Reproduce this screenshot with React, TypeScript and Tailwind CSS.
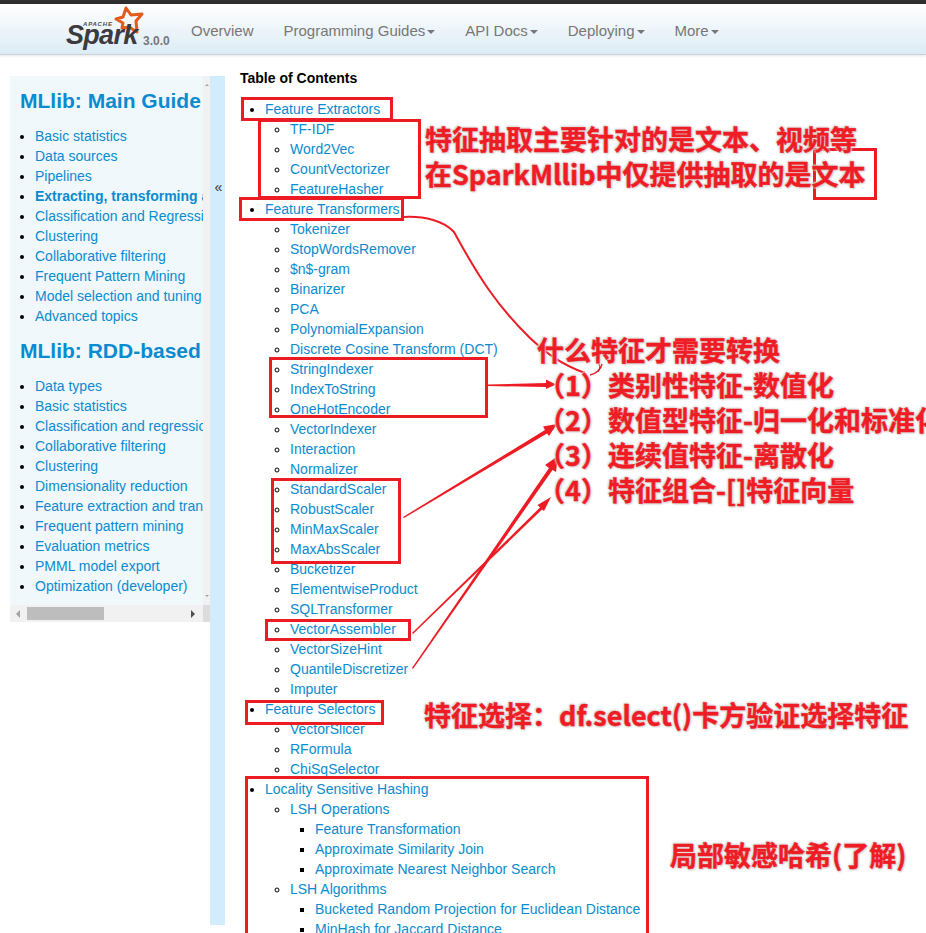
import React from 'react';

type Item = { label: string; children?: Item[] };

const mainGuide = [
    'Basic statistics', 'Data sources', 'Pipelines', 'Extracting, transforming and selecting features',
    'Classification and Regression', 'Clustering', 'Collaborative filtering', 'Frequent Pattern Mining',
    'Model selection and tuning', 'Advanced topics',
];

const rddGuide = [
    'Data types', 'Basic statistics', 'Classification and regression', 'Collaborative filtering', 'Clustering',
    'Dimensionality reduction', 'Feature extraction and transformation', 'Frequent pattern mining',
    'Evaluation metrics', 'PMML model export', 'Optimization (developer)',
];

const toc: Item[] = [
    { label: 'Feature Extractors', children: ['TF-IDF', 'Word2Vec', 'CountVectorizer', 'FeatureHasher'].map((label) => ({ label })) },
    {
        label: 'Feature Transformers',
        children: [
            'Tokenizer', 'StopWordsRemover', '$n$-gram', 'Binarizer', 'PCA', 'PolynomialExpansion',
            'Discrete Cosine Transform (DCT)', 'StringIndexer', 'IndexToString', 'OneHotEncoder', 'VectorIndexer',
            'Interaction', 'Normalizer', 'StandardScaler', 'RobustScaler', 'MinMaxScaler', 'MaxAbsScaler', 'Bucketizer',
            'ElementwiseProduct', 'SQLTransformer', 'VectorAssembler', 'VectorSizeHint', 'QuantileDiscretizer', 'Imputer',
        ].map((label) => ({ label })),
    },
    { label: 'Feature Selectors', children: ['VectorSlicer', 'RFormula', 'ChiSqSelector'].map((label) => ({ label })) },
    {
        label: 'Locality Sensitive Hashing',
        children: [
            {
                label: 'LSH Operations',
                children: ['Feature Transformation', 'Approximate Similarity Join', 'Approximate Nearest Neighbor Search'].map((label) => ({ label })),
            },
            {
                label: 'LSH Algorithms',
                children: ['Bucketed Random Projection for Euclidean Distance', 'MinHash for Jaccard Distance'].map((label) => ({ label })),
            },
        ],
    },
];

const navItems = [
    { label: 'Overview', caret: false },
    { label: 'Programming Guides', caret: true },
    { label: 'API Docs', caret: true },
    { label: 'Deploying', caret: true },
    { label: 'More', caret: true },
];

const listStyles = ['list-disc', 'list-[circle]', 'list-[square]'];

const TocList: React.FC<{ items: Item[]; depth?: number }> = ({ items, depth = 0 }) => (
    <ul className={`pl-[25px] ${listStyles[depth]}`}>
        {items.map((item) => (
            <li key={item.label} className="leading-[20px]">
                <a className="text-[#0a8bd0]">{item.label}</a>
                {item.children && <TocList items={item.children} depth={depth + 1} />}
            </li>
        ))}
    </ul>
);

const SideList: React.FC<{ items: string[] }> = ({ items }) => (
    <ul className="list-disc pl-[25px] mb-[10px]">
        {items.map((label) => (
            <li key={label} className="leading-[20px] whitespace-nowrap">
                <a className={`text-[#0a8bd0] ${label.startsWith('Extracting') ? 'font-bold' : ''}`}>{label}</a>
            </li>
        ))}
    </ul>
);

const labelClass =
    'absolute whitespace-nowrap font-bold text-[#ee1c25] text-[27px] leading-[36px] [-webkit-text-stroke:0.5px_#ee1c25] [text-shadow:0_0_2px_#fff,0_0_3px_#ccc,1px_1px_2px_#bbb,-1px_-1px_2px_#ccc]';

const Box: React.FC<{ className: string }> = ({ className }) => (
    <div className={`absolute border-[3px] border-[#ed1c24] ${className}`} />
);

const Annotations: React.FC = () => (
    <div className="absolute inset-0 pointer-events-none [font-family:'Noto_Sans_CJK_SC','Liberation_Sans',sans-serif]">
        <Box className="left-[241px] top-[97px] w-[152px] h-[24px]" />
        <Box className="left-[258px] top-[119px] w-[163px] h-[80px]" />
        <Box className="left-[239px] top-[197px] w-[165px] h-[24px]" />
        <Box className="left-[269px] top-[357px] w-[219px] h-[61px]" />
        <Box className="left-[271px] top-[478px] w-[130px] h-[86px]" />
        <Box className="left-[265px] top-[619px] w-[146px] h-[22px]" />
        <Box className="left-[245px] top-[700px] w-[139px] h-[25px]" />
        <Box className="left-[245px] top-[776px] w-[404px] h-[170px]" />
        <Box className="left-[813px] top-[148px] w-[64px] h-[52px]" />

        <svg className="absolute left-0 top-0" width="926" height="933" viewBox="0 0 926 933" fill="none">
            <path d="M404 217C425 216 444 221 454 232C478 276 497 306 530 338C545 352 560 364 585 373" stroke="#ed1c24" strokeWidth="2" />
            <path d="M590 375C596 374 601 369 602 364" stroke="#ed1c24" strokeWidth="1.5" />
            <path d="M598 372C600 370 600 367 599 364" stroke="#ed1c24" strokeWidth="1" />
            <path d="M488 384.5L546 383L546 379.5L556 384.5L546 389L546 387L488 386Z" fill="#ed1c24" />
            <path d="M403 517L545 430L543 426.500L557 424L549 436L547 433.500L404 518Z" fill="#ed1c24" />
            <path d="M412 668L549 468L545 465L558 456L556 472L552.500 470L413 669Z" fill="#ed1c24" />
            <path d="M412 633L540 507.500L537.500 505L551 497L544 511L542 509.500L413 634Z" fill="#ed1c24" />
        </svg>

        <div className={`${labelClass} left-[425px] top-[121px]`}>特征抽取主要针对的是文本、视频等</div>
        <div className={`${labelClass} left-[425px] top-[156px]`}>在SparkMllib中仅提供抽取的是文本</div>
        <div className={`${labelClass} left-[537px] top-[332px]`}>什么特征才需要转换</div>
        <div className={`${labelClass} left-[538px] top-[367px]`}>（1）类别性特征-数值化</div>
        <div className={`${labelClass} left-[538px] top-[402px]`}>（2）数值型特征-归一化和标准化</div>
        <div className={`${labelClass} left-[538px] top-[437px]`}>（3）连续值特征-离散化</div>
        <div className={`${labelClass} left-[538px] top-[472px]`}>（4）特征组合-[]特征向量</div>
        <div className={`${labelClass} left-[424px] top-[697px]`}>特征选择：df.select()卡方验证选择特征</div>
        <div className={`${labelClass} left-[670px] top-[837px]`}>局部敏感哈希(了解)</div>
    </div>
);

const Logo: React.FC = () => (
    <div className="relative w-[108px] h-[51px] shrink-0">
        <svg className="absolute left-[47px] top-[1px]" width="32" height="32" viewBox="0 0 32 32" fill="none">
            <path d="M3 14L10 12L13 3L18 10L29 9L23 16L24 27L16 22L9 23L10 18Z" stroke="#e25a1c" strokeWidth="3" strokeLinejoin="round" />
        </svg>
        <span className="absolute left-[17px] top-[17px] text-[6px] leading-[7px] font-bold italic text-[#4a4a4a] tracking-[0.8px]">APACHE</span>
        <span className="absolute left-0 top-[16px] text-[27px] leading-[30px] font-bold italic text-[#3c3a3e] tracking-[-0.7px]">Spark</span>
        <span className="absolute left-[77px] top-[30px] text-[12px] leading-[14px] font-bold text-[#777777]">3.0.0</span>
    </div>
);

export default function App() {
    return (
        <div className="relative w-[926px] h-[933px] overflow-hidden bg-white text-[14px] text-black [font-family:'Liberation_Sans',Arial,sans-serif]">
            <div className="h-[4px] bg-[#2f2f2f]" />
            <nav className="flex items-center h-[51px] pl-[66px] bg-gradient-to-b from-white to-[#dcebf5] border-b border-[#c9d3da] shadow-[0_1px_3px_rgba(0,0,0,0.1)]">
                <Logo />
                <div className="flex gap-[30px] ml-[17px] pt-[5px] text-[#777777] text-[15px]">
                    {navItems.map((item) => (
                        <span key={item.label} className="flex items-center gap-[2px]">
                            {item.label}
                            {item.caret && <span className="w-0 h-0 border-x-[4px] border-x-transparent border-t-[4px] border-t-[#777777]" />}
                        </span>
                    ))}
                </div>
            </nav>

            <div className="flex pt-[21px]">
                <div className="flex shrink-0 ml-[10px]">
                    <aside className="relative w-[200px] h-[546px] bg-[#f0f8fc] overflow-hidden flex flex-col">
                        <div className="flex-1 w-[193px] overflow-hidden pt-[12px]">
                            <h3 className="pl-[10px] text-[21px] leading-[26px] font-bold text-[#0a8bd0] whitespace-nowrap mb-[12px]">MLlib: Main Guide</h3>
                            <SideList items={mainGuide} />
                            <h3 className="pl-[10px] text-[21px] leading-[26px] font-bold text-[#0a8bd0] whitespace-nowrap mb-[12px] mt-[12px]">MLlib: RDD-based API Guide</h3>
                            <SideList items={rddGuide} />
                        </div>
                        <div className="absolute right-0 top-0 bottom-[17px] w-[7px] bg-[#f1f1f1] flex flex-col items-center justify-between py-[8px]">
                            <span className="w-0 h-0 border-x-[2px] border-x-transparent border-b-[2px] border-b-[#a3a3a3]" />
                            <span className="w-0 h-0 border-x-[2px] border-x-transparent border-t-[2px] border-t-[#a3a3a3]" />
                        </div>
                        <div className="absolute left-0 right-0 bottom-0 h-[17px] bg-[#f1f1f1] flex items-center">
                            <span className="ml-[6px] w-0 h-0 border-y-[4px] border-y-transparent border-r-[4px] border-r-[#a3a3a3]" />
                            <span className="ml-[7px] w-[77px] h-[13px] bg-[#bdbdbd]" />
                            <span className="ml-[87px] w-0 h-0 border-y-[4px] border-y-transparent border-l-[4px] border-l-[#505050]" />
                            <span className="ml-auto w-[7px] h-full bg-[#dcdcdc]" />
                        </div>
                    </aside>
                    <div className="w-[15px] h-[849px] bg-[#d1edfd] flex justify-center pl-[2px] pt-[101px] text-[14px] leading-[20px] text-[#333333]">«</div>
                </div>
                <main className="ml-[15px] flex-1">
                    <p className="font-bold leading-[20px] mt-[-8px]">Table of Contents</p>
                    <div className="mt-[11px]">
                        <TocList items={toc} />
                    </div>
                </main>
            </div>

            <Annotations />
        </div>
    );
}
